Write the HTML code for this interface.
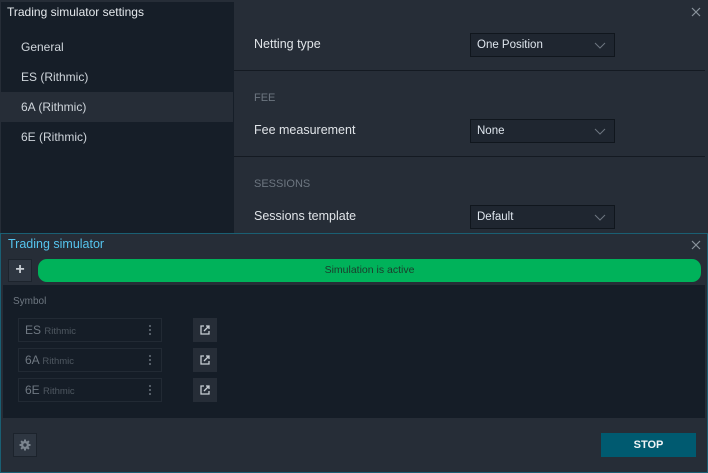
<!DOCTYPE html>
<html><head><style>
*{margin:0;padding:0;box-sizing:border-box}
body{width:708px;height:473px;background:#262d37;font-family:"Liberation Sans","DejaVu Sans",sans-serif;font-size:12px;color:#d8dde3;position:relative;overflow:hidden}
.a{position:absolute}
.left{left:1px;top:2px;width:233px;height:231px;background:#161e28}
.item{left:21px;font-size:12px;color:#cfd5db}
.sel{left:1px;top:92px;width:232px;height:30px;background:#262d37}
.lbl{left:254px;font-size:12.5px;color:#e0e4e8}
.sec{left:254px;font-size:11px;color:#6d7680}
.sep{left:234px;width:471px;height:1px;background:#141a22}
.dd{left:470px;width:145px;height:24px;border:1px solid #10161d;background:#1f2630;color:#dfe6ee;font-size:11.5px;padding:5px 6px}
.dd svg{position:absolute;right:8px;top:8px}
.bw{left:0;top:233px;width:708px;height:240px;border:1px solid #1a5f73;background:#262d37}
.row{left:18px;width:144px;height:24px;border:1px solid #222a34;color:#6f7882;font-size:12px;padding:4px 6px}
.row small{font-size:9.5px;color:#4f5861}
.row i{position:absolute;right:10px;top:6px;width:2px;height:2px;background:#555e68;box-shadow:0 4px #555e68,0 8px #555e68}
.lk{left:193px;width:24px;height:24px;background:#262d37}
</style></head><body>
<div class="a left"></div>
<div class="a sel"></div>
<div class="a" style="left:7px;top:5px;font-size:12px;color:#e4e8ec">Trading simulator settings</div>
<div class="a item" style="top:40px">General</div>
<div class="a item" style="top:70px">ES (Rithmic)</div>
<div class="a item" style="top:100px">6A (Rithmic)</div>
<div class="a item" style="top:130px">6E (Rithmic)</div>
<svg class="a" style="left:691px;top:7px" width="10" height="10"><path d="M1 1L9 9M9 1L1 9" stroke="#8a939c" stroke-width="1.2"/></svg>
<div class="a lbl" style="top:37px">Netting type</div>
<div class="a sep" style="top:70px"></div>
<div class="a sec" style="top:92px">FEE</div>
<div class="a lbl" style="top:123px">Fee measurement</div>
<div class="a sep" style="top:156px"></div>
<div class="a sec" style="top:178px">SESSIONS</div>
<div class="a lbl" style="top:209px">Sessions template</div>
<div class="a dd" style="top:33px">One Position<svg width="12" height="7"><path d="M1 1L6 6L11 1" stroke="#6d7680" fill="none"/></svg></div>
<div class="a dd" style="top:119px">None<svg width="12" height="7"><path d="M1 1L6 6L11 1" stroke="#6d7680" fill="none"/></svg></div>
<div class="a dd" style="top:205px">Default<svg width="12" height="7"><path d="M1 1L6 6L11 1" stroke="#6d7680" fill="none"/></svg></div>

<div class="a bw"></div>
<div class="a" style="left:8px;top:237px;font-size:12.5px;color:#55c4ee">Trading simulator</div>
<svg class="a" style="left:691px;top:240px" width="10" height="10"><path d="M1 1L9 9M9 1L1 9" stroke="#8a939c" stroke-width="1.2"/></svg>
<div class="a" style="left:8px;top:259px;width:24px;height:23px;background:#2e3641;border:1px solid #1c232c;color:#c8ced4;text-align:center;font-size:16px;line-height:20px;font-weight:bold">+</div>
<div class="a" style="left:38px;top:259px;width:663px;height:23px;background:#00b25a;border-radius:9px;color:#1c3b2c;font-size:10.5px;text-align:center;line-height:23px">Simulation is active</div>
<div class="a" style="left:3px;top:285px;width:702px;height:133px;background:#151d27"></div>
<div class="a" style="left:13px;top:296px;font-size:10px;color:#6f7882">Symbol</div>
<div class="a row" style="top:318px">ES <small>Rithmic</small><i></i></div>
<div class="a row" style="top:348px">6A <small>Rithmic</small><i></i></div>
<div class="a row" style="top:378px">6E <small>Rithmic</small><i></i></div>
<div class="a lk" style="top:318px"><svg width="24" height="24"><path d="M11 8H8V16H16V13M13 8H16V11M16 8L11 13" stroke="#c8ced4" fill="none" stroke-width="1.3"/></svg></div>
<div class="a lk" style="top:348px"><svg width="24" height="24"><path d="M11 8H8V16H16V13M13 8H16V11M16 8L11 13" stroke="#c8ced4" fill="none" stroke-width="1.3"/></svg></div>
<div class="a lk" style="top:378px"><svg width="24" height="24"><path d="M11 8H8V16H16V13M13 8H16V11M16 8L11 13" stroke="#c8ced4" fill="none" stroke-width="1.3"/></svg></div>
<div class="a" style="left:13px;top:433px;width:24px;height:24px;background:#2e3641;border:1px solid #1c232c"><svg width="22" height="22"><g fill="#7c858f"><circle cx="11" cy="11" r="4"/><rect x="10" y="5.5" width="2" height="11"/><rect x="5.5" y="10" width="11" height="2"/><rect x="10" y="5.5" width="2" height="11" transform="rotate(45 11 11)"/><rect x="10" y="5.5" width="2" height="11" transform="rotate(-45 11 11)"/></g><circle cx="11" cy="11" r="1.7" fill="#2e3641"/></svg></div>
<div class="a" style="left:601px;top:433px;width:95px;height:24px;background:#005a70;color:#f0f4f6;font-size:11px;font-weight:bold;text-align:center;line-height:24px">STOP</div>
</body></html>
